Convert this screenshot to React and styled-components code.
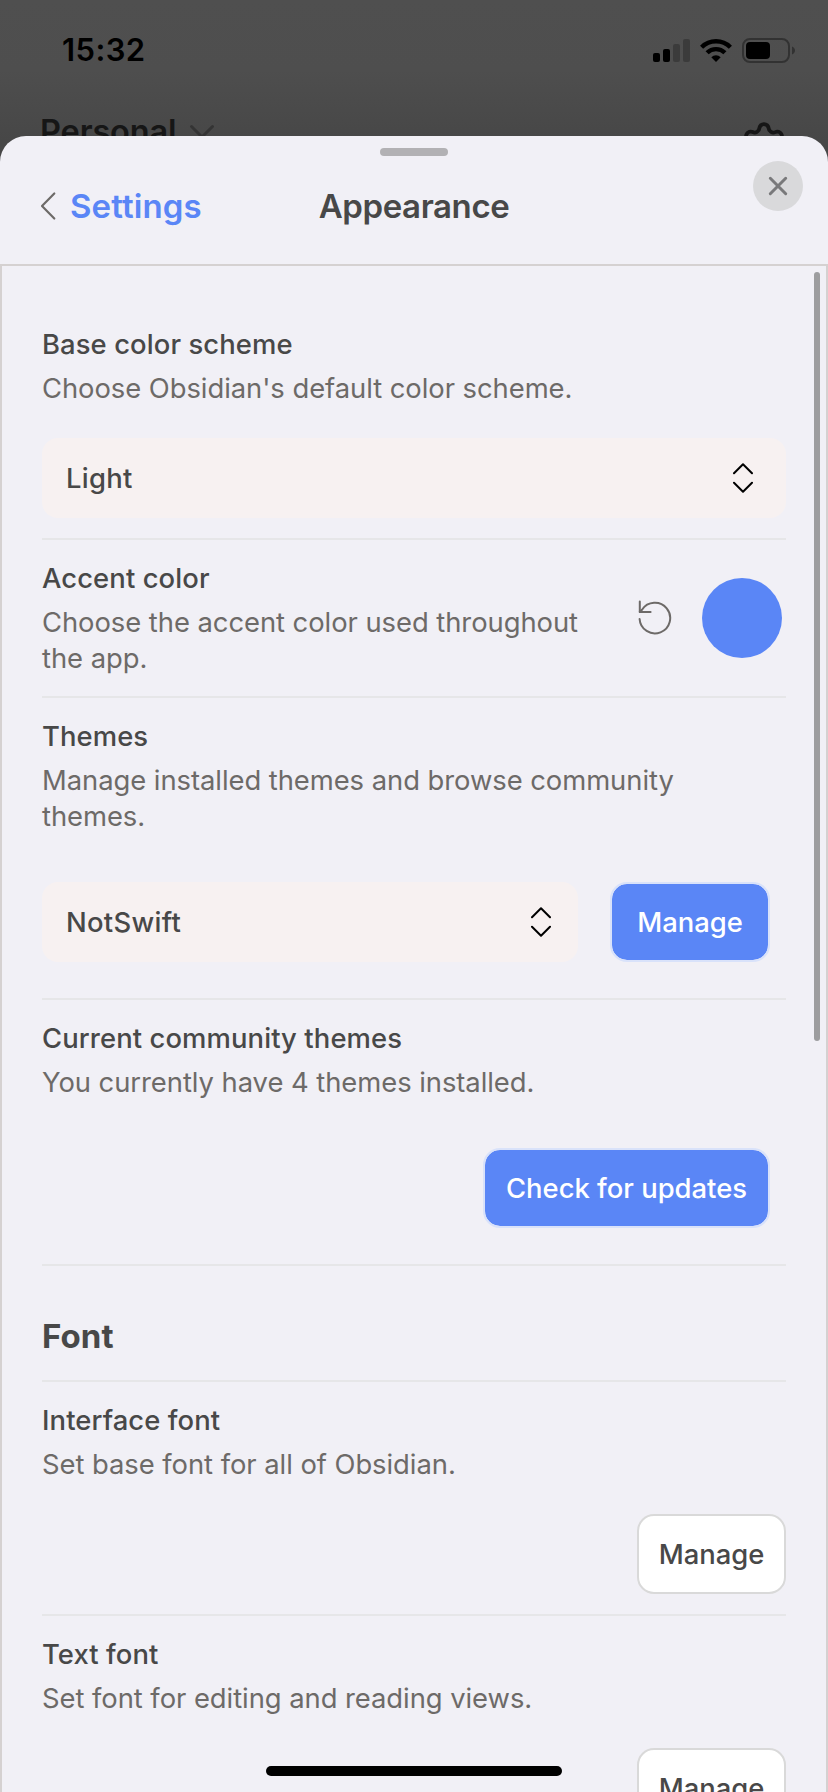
import React from 'react';
import styled, { createGlobalStyle, css } from 'styled-components';
import { Settings as GearIcon } from 'lucide-react';

const GlobalStyle = createGlobalStyle`
  * { box-sizing: border-box; }
  body {
    margin: 0;
    font-family: Inter, "Liberation Sans", sans-serif;
    -webkit-font-smoothing: antialiased;
  }
  button { font-family: inherit; cursor: pointer; }
`;

const Screen = styled.div`
  position: relative;
  width: 828px;
  height: 1792px;
  overflow: hidden;
  background: linear-gradient(#4f4f4f 0, #4e4e4e 70px, #474747 140px);
`;

const StatusBar = styled.div`
  display: flex;
  align-items: center;
  justify-content: space-between;
  height: 98px;
  padding: 2px 33px 0 62px;
`;

const Clock = styled.span`
  font-size: 31px;
  line-height: 38px;
  font-weight: 600;
  letter-spacing: 0.4px;
  color: #000;
`;

const StatusIcons = styled.div`
  display: flex;
  align-items: center;
  gap: 10px;
`;

const VaultBar = styled.div`
  display: flex;
  align-items: flex-start;
  justify-content: space-between;
  height: 80px;
  padding: 15px 40px 0 40px;

  > svg { margin-top: 7px; }
`;

const VaultName = styled.div`
  display: flex;
  align-items: center;
  gap: 13px;
  font-size: 32.5px;
  line-height: 38px;
  font-weight: 600;
  letter-spacing: -0.15px;
  color: #161616;
`;

const Sheet = styled.section`
  position: absolute;
  inset: 136px 0 0 0;
  display: flex;
  flex-direction: column;
  border-radius: 26px 26px 0 0;
  overflow: hidden;
  background: #f1f0f6;
`;

const SheetHeader = styled.header`
  flex: none;
  display: grid;
  grid-template-columns: 1fr auto 1fr;
  align-items: start;
  align-content: start;
  height: 128px;
  padding: 12px 25px 0 38px;
`;

const Handle = styled.div`
  grid-column: 1 / -1;
  justify-self: center;
  width: 68px;
  height: 8px;
  margin-left: -13px;
  border-radius: 4px;
  background: #b2b1b4;
`;

const BackLink = styled.button`
  display: flex;
  align-items: center;
  gap: 12px;
  height: 40px;
  margin-top: 30px;
  padding: 0;
  border: 0;
  background: none;
  font-size: 33px;
  font-weight: 600;
  letter-spacing: 0.1px;
  color: #5a86f6;
`;

const SheetTitle = styled.h1`
  margin: 30px 0 0 -13px;
  font-size: 33px;
  line-height: 40px;
  font-weight: 600;
  letter-spacing: -0.4px;
  color: #484848;
`;

const CloseButton = styled.button`
  justify-self: end;
  display: grid;
  place-items: center;
  width: 50px;
  height: 50px;
  margin-top: 5px;
  padding: 0;
  border: 0;
  border-radius: 50%;
  background: #d9d9db;
`;

const Content = styled.main`
  position: relative;
  flex: 1;
  min-height: 0;
  overflow: hidden;
  padding: 38px 40px 0;
  border: 2px solid #d5d1d1;
  border-bottom: 0;
`;

const ScrollThumb = styled.div`
  position: absolute;
  top: 6px;
  right: 6px;
  width: 6px;
  height: 769px;
  border-radius: 3px;
  background: #9d9d9f;
`;

const Item = styled.section`
  display: flex;
  flex-direction: ${(p) => (p.$inline ? 'row' : 'column')};
  align-items: ${(p) => (p.$inline ? 'center' : 'stretch')};
  justify-content: space-between;
  padding: 20px 0;
  border-top: 2px solid ${(p) => (p.$first ? 'transparent' : '#e6e6e8')};
`;

const Info = styled.div`
  display: flex;
  flex-direction: column;
  gap: 8px;
  max-width: 730px;
`;

const Name = styled.div`
  font-size: 27.4px;
  line-height: 36px;
  font-weight: 500;
  letter-spacing: 0.1px;
  color: #484848;
`;

const Description = styled.div`
  font-size: 27.4px;
  line-height: 36px;
  letter-spacing: -0.05px;
  color: #6d6a68;
`;

const Controls = styled.div`
  display: flex;
  align-items: center;
  justify-content: flex-end;
  margin: ${(p) => (p.$roomy ? '48px 16px 16px 0' : '32px 0 0')};
  gap: 32px;
`;

const Select = styled.button`
  flex: 1;
  display: flex;
  align-items: center;
  justify-content: space-between;
  height: 80px;
  padding: 0 ${(p) => p.$end || 32}px 0 24px;
  border: 0;
  border-radius: 16px;
  background: #f7f1f1;
  font-size: 27.4px;
  font-weight: 500;
  letter-spacing: 0.3px;
  color: #484848;
`;

const Button = styled.button`
  flex: none;
  width: ${(p) => p.$width}px;
  height: 80px;
  padding: 0;
  border-radius: 17px;
  font-size: 27.4px;
  font-weight: 500;
  white-space: nowrap;
  ${(p) =>
    p.$primary
      ? css`
          border: 2px solid #d9e2fa;
          background: #5a86f6;
          background-clip: padding-box;
          color: #fff;
        `
      : css`
          border: 2px solid #d9d9d9;
          background: #fff;
          color: #484848;
        `}
`;

const AccentControls = styled.div`
  display: flex;
  align-items: center;
  gap: 30px;
  padding-right: 4px;
`;

const Swatch = styled.div`
  width: 80px;
  height: 80px;
  border-radius: 50%;
  background: #5a86f6;
`;

const SectionHeading = styled.h2`
  margin: 0;
  height: 116px;
  padding-top: 50px;
  border-top: 2px solid #e6e6e8;
  font-size: 33px;
  line-height: 40px;
  font-weight: 700;
  letter-spacing: 0.1px;
  color: #484848;
`;

const HomeIndicator = styled.div`
  position: absolute;
  left: 266px;
  bottom: 16px;
  width: 296px;
  height: 10px;
  border-radius: 5px;
  background: #000;
`;

const SignalIcon = () => (
  <svg width="37" height="25" viewBox="0 0 37 25">
    <rect x="0" y="15" width="7" height="9" rx="2" />
    <rect x="10" y="11" width="7" height="13" rx="2" />
    <rect x="20" y="6" width="7" height="18" rx="2" fill="#3b3b3b" />
    <rect x="30" y="1" width="7" height="23" rx="2" fill="#3b3b3b" />
  </svg>
);

const WifiIcon = () => (
  <svg width="32" height="25" viewBox="0 0 32 25" fill="none" stroke="#000" strokeWidth="4.4">
    <path d="M1.6 9.2a20.4 20.4 0 0 1 28.8 0" />
    <path d="M7.1 14.8a12.6 12.6 0 0 1 17.8 0" />
    <path d="M16 24l-4.7-4.8a6.8 6.8 0 0 1 9.4 0z" fill="#000" stroke="none" />
  </svg>
);

const BatteryIcon = () => (
  <svg width="53" height="25" viewBox="0 0 53 25">
    <rect x="1" y="1" width="46" height="23" rx="7" fill="none" stroke="#323232" strokeWidth="2" />
    <rect x="4" y="4" width="24" height="17" rx="4" />
    <path d="M50 8.5c4 1.5 4 6.5 0 8z" fill="#323232" />
  </svg>
);

const ChevronUpDown = () => (
  <svg width="22" height="30" viewBox="0 0 22 30" fill="none" stroke="#000" strokeWidth="2" strokeLinecap="round" strokeLinejoin="round">
    <path d="M2 10.2l9-9 9 9M2 19.8l9 9 9-9" />
  </svg>
);

const ResetIcon = () => (
  <svg width="34" height="36" viewBox="0 0 34 36" fill="none" stroke="#6d6a68" strokeWidth="2" strokeLinecap="round" strokeLinejoin="round">
    <path d="M1.8 1.5v10.5h10.8" />
    <path d="M1.6 19a15.3 15.3 0 1 0 2.4-9.2l-2.2 2.2" />
  </svg>
);

const settings = [
  { name: 'Interface font', description: 'Set base font for all of Obsidian.' },
  { name: 'Text font', description: 'Set font for editing and reading views.' },
];

function SettingInfo({ name, children }) {
  return (
    <Info>
      <Name>{name}</Name>
      <Description>{children}</Description>
    </Info>
  );
}

export default function App() {
  return (
    <Screen>
      <GlobalStyle />
      <StatusBar>
        <Clock>15:32</Clock>
        <StatusIcons>
          <SignalIcon />
          <WifiIcon />
          <BatteryIcon />
        </StatusIcons>
      </StatusBar>
      <VaultBar>
        <VaultName>
          Personal
          <svg width="26" height="16" viewBox="0 0 26 16" fill="none" stroke="#343434" strokeWidth="3" strokeLinecap="round">
            <path d="M2.5 2.5L13 13 23.5 2.5" />
          </svg>
        </VaultName>
        <GearIcon size={48} strokeWidth={1.9} color="#161616" />
      </VaultBar>

      <Sheet>
        <SheetHeader>
          <Handle />
          <BackLink>
            <svg width="20" height="30" viewBox="0 0 20 30" fill="none" stroke="#6d6a68" strokeWidth="2.2" strokeLinecap="round" strokeLinejoin="round">
              <path d="M16.3 2.5L4 15l12.3 12.5" />
            </svg>
            Settings
          </BackLink>
          <SheetTitle>Appearance</SheetTitle>
          <CloseButton aria-label="Close">
            <svg width="20" height="20" viewBox="0 0 20 20" stroke="#79797b" strokeWidth="3" strokeLinecap="round">
              <path d="M2.3 2.3l15.4 15.4M17.7 2.3L2.3 17.7" />
            </svg>
          </CloseButton>
        </SheetHeader>

        <Content>
          <Item $first>
            <SettingInfo name="Base color scheme">Choose Obsidian's default color scheme.</SettingInfo>
            <Controls>
              <Select>
                Light
                <ChevronUpDown />
              </Select>
            </Controls>
          </Item>

          <Item $inline>
            <SettingInfo name="Accent color">
              Choose the accent color used throughout
              <br />
              the app.
            </SettingInfo>
            <AccentControls>
              <ResetIcon />
              <Swatch />
            </AccentControls>
          </Item>

          <Item>
            <SettingInfo name="Themes">Manage installed themes and browse community themes.</SettingInfo>
            <Controls $roomy>
              <Select $end={26}>
                NotSwift
                <ChevronUpDown />
              </Select>
              <Button $primary $width={160}>Manage</Button>
            </Controls>
          </Item>

          <Item>
            <SettingInfo name="Current community themes">You currently have 4 themes installed.</SettingInfo>
            <Controls $roomy>
              <Button $primary $width={287}>Check for updates</Button>
            </Controls>
          </Item>

          <SectionHeading>Font</SectionHeading>

          {settings.map((s) => (
            <Item key={s.name}>
              <SettingInfo name={s.name}>{s.description}</SettingInfo>
              <Controls>
                <Button $width={149}>Manage</Button>
              </Controls>
            </Item>
          ))}
          <ScrollThumb />
        </Content>
        <HomeIndicator />
      </Sheet>
    </Screen>
  );
}
